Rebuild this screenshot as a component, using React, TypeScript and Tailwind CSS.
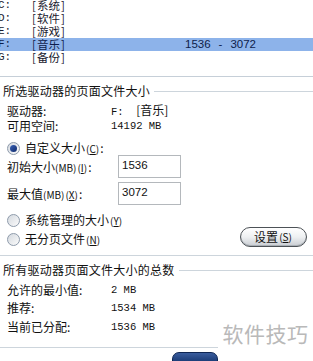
const cjk = "font-['Noto_Sans_CJK_SC',sans-serif]";
const mono = "font-['Liberation_Mono','Noto_Sans_CJK_SC',monospace]";

const drives = [
  { d: "C:", n: "系统" },
  { d: "D:", n: "软件" },
  { d: "E:", n: "游戏" },
  { d: "F:", n: "音乐", sel: true },
  { d: "G:", n: "备份" },
];

function Key({ k }: { k: string }) {
  return (
    <span className="mx-[1px] text-[10px]">
      (<span className="underline">{k}</span>)
    </span>
  );
}

function Radio({ checked }: { checked?: boolean }) {
  return (
    <span className="flex size-[13px] shrink-0 items-center justify-center rounded-full border border-[#8e9bab] bg-gradient-to-br from-[#d4d9df] to-[#fbfbfb]">
      {checked && (
        <span className="size-[7px] rounded-full bg-gradient-to-br from-[#3a63b8] to-[#102a6a]" />
      )}
    </span>
  );
}

function GroupTitle({ text }: { text: string }) {
  return (
    <div className="flex h-[14px] items-center leading-[14px]">
      <span className="pl-[3px] pr-[4px] tracking-[0.25px]">{text}</span>
      <span className="h-px flex-1 bg-[#cdd5dc]" />
    </div>
  );
}

function InfoRow({ label, children, className }: { label: string; children: React.ReactNode; className?: string }) {
  return (
    <div className={`flex h-[14px] items-center leading-[14px] ${className ?? ""}`}>
      <span className="w-[111px] shrink-0 pl-[7px]">{label}</span>
      <span className={`${mono} text-[10.5px]`}>{children}</span>
    </div>
  );
}

export default function App() {
  return (
    <div className={`relative h-[361px] w-[313px] overflow-hidden bg-white text-[12px] text-[#111] ${cjk}`}>
      {/* drive list */}
      <div className="h-[78px] border-b border-[#c6cfd8]">
        <div className="-mt-[1px]">
          {drives.map((r) => (
            <div
              key={r.d}
              className={`flex h-[13px] items-center text-[11.5px] leading-[13px] ${r.sel ? "bg-[#8db3ea] text-[#0d1d4a]" : "text-[#1a1a2e]"}`}
            >
              <span className={`-ml-[2px] w-[34px] shrink-0 ${mono} text-[11px]`}>{r.d}</span>
              <span className="flex w-[153px] shrink-0">
                <span className="mr-[1px]">[</span>
                {r.n}
                <span className="ml-[1px]">]</span>
              </span>
              {r.sel && (
                <span className="flex font-['Liberation_Sans',sans-serif] text-[11.5px]">
                  <span>1536</span>
                  <span className="mx-[8px]">-</span>
                  <span>3072</span>
                </span>
              )}
            </div>
          ))}
        </div>
      </div>

      {/* selected drive */}
      <div className="mt-[7px]">
        <GroupTitle text="所选驱动器的页面文件大小" />
        <InfoRow label="驱动器:" className="mt-[6px]">
          F:&nbsp;&nbsp;<span className={`${cjk} text-[12px]`}>[音乐]</span>
        </InfoRow>
        <InfoRow label="可用空间:" className="mt-[1px]">
          14192 MB
        </InfoRow>

        <div className="mt-[8px] flex h-[14px] items-center gap-[5px] pl-[7px] leading-[14px]">
          <Radio checked />
          <span>
            自定义大小<Key k="C" />:
          </span>
        </div>

        <div className="flex h-[23px] items-center">
          <span className="w-[118px] shrink-0 pl-[7px]">
            初始大小<span className="text-[10px]">(MB)</span>
            <Key k="I" />:
          </span>
          <div className="h-[23px] w-[63px] border border-[#b4b8bc] pl-[3px] pt-[2px] font-['Liberation_Sans',sans-serif] text-[11.5px] leading-[14px]">
            1536
          </div>
        </div>
        <div className="mt-[4px] flex h-[23px] items-center">
          <span className="w-[118px] shrink-0 pl-[7px]">
            最大值<span className="text-[10px]">(MB)</span>
            <Key k="X" />:
          </span>
          <div className="h-[23px] w-[63px] border border-[#b4b8bc] pl-[3px] pt-[2px] font-['Liberation_Sans',sans-serif] text-[11.5px] leading-[14px]">
            3072
          </div>
        </div>

        <div className="mt-[8px] flex h-[14px] items-center gap-[5px] pl-[7px] leading-[14px]">
          <Radio />
          <span>
            系统管理的大小<Key k="Y" />
          </span>
        </div>

        <div className="flex h-[20px] items-start justify-between pr-[6px]">
          <div className="mt-[5px] flex h-[14px] items-center gap-[5px] pl-[7px] leading-[14px]">
            <Radio />
            <span>
              无分页文件<Key k="N" />
            </span>
          </div>
          <button className="flex h-[20px] w-[67px] items-center justify-center rounded-full border border-[#4d5257] bg-gradient-to-b from-[#ffffff] via-[#eef0f2] to-[#c9cdd2] text-[12px] leading-none shadow-[inset_0_-1px_0_#aab0b6]">
            设置<Key k="S" />
          </button>
        </div>

        <div className="mt-[8px] h-px bg-[#cdd5dc]" />
      </div>

      {/* totals */}
      <div className="mt-[7px]">
        <GroupTitle text="所有驱动器页面文件大小的总数" />
        <InfoRow label="允许的最小值:" className="mt-[6px]">
          2 MB
        </InfoRow>
        <InfoRow label="推荐:" className="mt-[4px]">
          1534 MB
        </InfoRow>
        <InfoRow label="当前已分配:" className="mt-[5px]">
          1536 MB
        </InfoRow>
        <div className="mt-[13px] h-px bg-[#cdd5dc]" />
        <div className="ml-[172px] mt-[4px] h-[12px] w-[46px] rounded-t-[7px] border border-[#0e2553] bg-gradient-to-b from-[#3a5d9e] to-[#163670]" />
      </div>

      {/* watermark */}
      <div className="absolute right-0 top-[316px] flex h-[45px] w-[95px] items-start justify-center bg-white pt-[3px]">
        <span className="text-[21px] leading-[28px] tracking-[0.5px] text-[#b9b9b9]">软件技巧</span>
      </div>
    </div>
  );
}
